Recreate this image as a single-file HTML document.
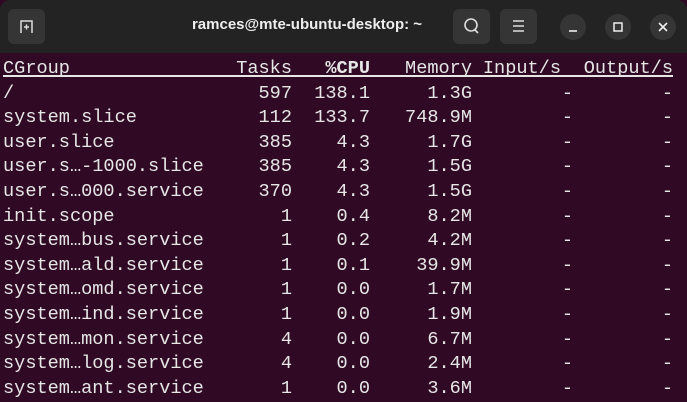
<!DOCTYPE html>
<html><head><style>
body{margin:0;width:687px;height:402px;background:#300a24;overflow:hidden;position:relative;font-family:"Liberation Mono",monospace;}
.hb{position:absolute;left:0;top:0;width:687px;height:53px;background:#232323;border-radius:10px 10px 0 0;}
.btn{position:absolute;top:9px;width:37px;height:35px;background:#353535;border-radius:6px;}
.c{position:absolute;top:14px;width:26px;height:26px;border-radius:50%;background:#353535;}
.title{position:absolute;left:0;width:614px;top:16px;text-align:center;color:#eee;font:bold 15px "Liberation Sans",sans-serif;}
.row{position:absolute;left:3px;height:24px;font-size:18.6px;color:#e6e6e6;white-space:pre;line-height:24px;}
.r{position:absolute;text-align:right;white-space:pre;font-size:18.6px;color:#e6e6e6;line-height:24px;}
</style></head><body>
<div class="hb"></div>
<div class="btn" style="left:8px"><svg width="37" height="35"><path d="M13 24V12h11v12M16 18h5M18.5 15.5v5" stroke="#ddd" stroke-width="1.5" fill="none"/></svg></div>
<div class="title">ramces@mte-ubuntu-desktop: ~</div>
<div class="btn" style="left:453px"><svg width="37" height="35"><circle cx="18" cy="16" r="6" stroke="#ddd" stroke-width="1.6" fill="none"/><path d="M22 21l3 3" stroke="#ddd" stroke-width="1.6"/></svg></div>
<div class="btn" style="left:500px"><svg width="37" height="35"><path d="M13 12h11M13 17h11M13 22h11" stroke="#ddd" stroke-width="1.5"/></svg></div>
<div class="c" style="left:560px"><svg width="26" height="26"><path d="M9 17h8" stroke="#eee" stroke-width="1.6"/></svg></div>
<div class="c" style="left:605px"><svg width="26" height="26"><rect x="9" y="9" width="8" height="8" stroke="#eee" stroke-width="1.5" fill="none"/></svg></div>
<div class="c" style="left:650px"><svg width="26" height="26"><path d="M9 9l8 8M17 9l-8 8" stroke="#eee" stroke-width="1.6"/></svg></div>
<div style="position:absolute;left:3px;top:75px;width:670px;height:2px;background:#e6e6e6"></div>
<div id="t"></div>
<script>
var rows=[["CGroup","Tasks","%CPU","Memory","Input/s","Output/s"],
["/","597","138.1","1.3G","-","-"],
["system.slice","112","133.7","748.9M","-","-"],
["user.slice","385","4.3","1.7G","-","-"],
["user.s…-1000.slice","385","4.3","1.5G","-","-"],
["user.s…000.service","370","4.3","1.5G","-","-"],
["init.scope","1","0.4","8.2M","-","-"],
["system…bus.service","1","0.2","4.2M","-","-"],
["system…ald.service","1","0.1","39.9M","-","-"],
["system…omd.service","1","0.0","1.7M","-","-"],
["system…ind.service","1","0.0","1.9M","-","-"],
["system…mon.service","4","0.0","6.7M","-","-"],
["system…log.service","4","0.0","2.4M","-","-"],
["system…ant.service","1","0.0","3.6M","-","-"]];
var rt=[292,370,472,561,673],h="";
rows.forEach(function(r,i){var y=57+i*24.6;
h+='<div class="row" style="top:'+y+'px">'+r[0]+'</div>';
for(var j=1;j<6;j++){var R=rt[j-1];if(i>0&&j==4)R=573;if(i>0&&j==5)R=673;
h+='<div class="r" style="top:'+y+'px;right:'+(687-R)+'px;'+(i==0&&j==2?'font-weight:bold;':'')+'">'+r[j]+'</div>';}});
document.getElementById('t').innerHTML=h;
</script>
</body></html>
